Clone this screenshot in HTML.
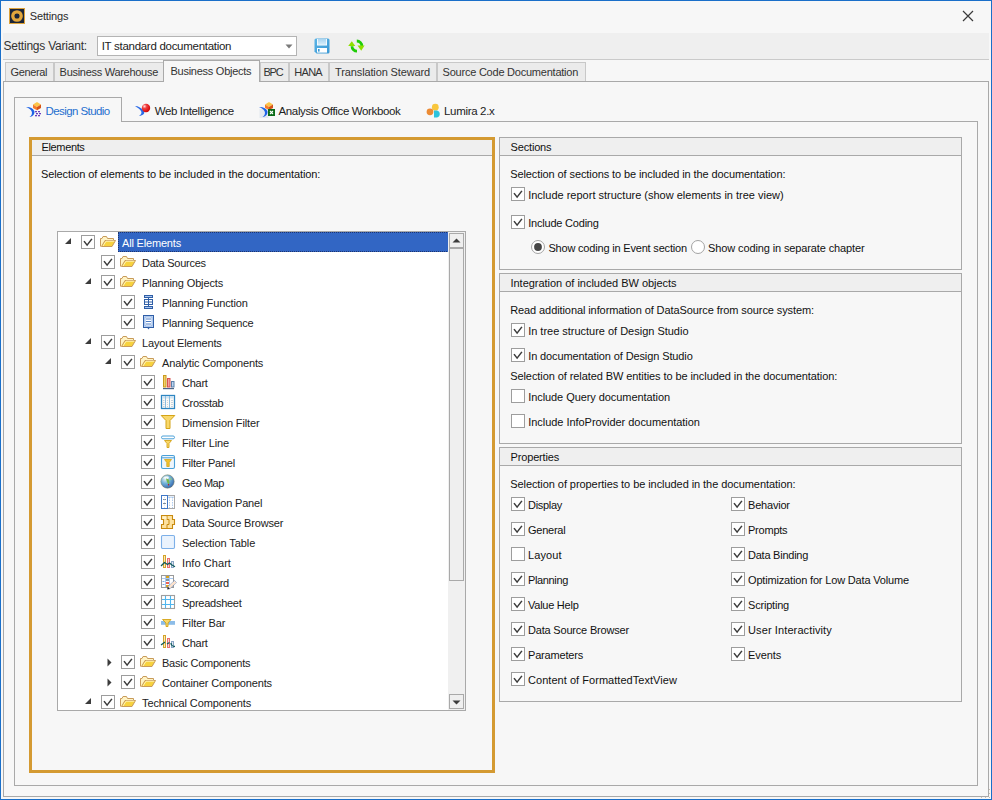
<!DOCTYPE html>
<html><head><meta charset="utf-8"><style>
html,body{margin:0;padding:0;}
body{width:992px;height:800px;position:relative;overflow:hidden;background:#f7f7f7;font-family:"Liberation Sans", sans-serif;}
svg{display:block;overflow:visible;}
</style></head><body>
<div style="position:absolute;left:0px;top:0px;width:992px;height:800px;box-sizing:border-box;border:1px solid #1a6fc9;"></div>
<svg style="position:absolute;left:9px;top:8px" width="16" height="16" viewBox="0 0 16 16"><rect x="0.5" y="0.5" width="15" height="15" fill="#1a2438" stroke="#dba13a"/>
<circle cx="8" cy="8" r="4.2" fill="none" stroke="#e2a63c" stroke-width="3.3"/>
<rect x="6" y="6" width="4" height="4" fill="#1a2438"/></svg>
<div style="position:absolute;left:29.8px;top:8.0px;height:16px;line-height:16px;font-size:11px;color:#2a2a2a;letter-spacing:-0.156px;white-space:nowrap;">Settings</div>
<svg style="position:absolute;left:962px;top:10px" width="12" height="12" viewBox="0 0 12 12"><path d="M1 1 L11 11 M11 1 L1 11" stroke="#3a3a3a" stroke-width="1.2"/></svg>
<div style="position:absolute;left:3px;top:33px;width:986px;height:26px;background:#efefef;"></div>
<div style="position:absolute;left:3px;top:59px;width:986px;height:1px;background:#cacaca;"></div>
<div style="position:absolute;left:3.5px;top:38.0px;height:16px;line-height:16px;font-size:12px;color:#333;letter-spacing:-0.222px;white-space:nowrap;">Settings Variant:</div>
<div style="position:absolute;left:97px;top:36px;width:200px;height:20px;box-sizing:border-box;border:1px solid #b4b4b4;background:#fff;"></div>
<div style="position:absolute;left:101.7px;top:38.0px;height:16px;line-height:16px;font-size:11.5px;color:#222;letter-spacing:-0.284px;white-space:nowrap;">IT standard documentation</div>
<svg style="position:absolute;left:285px;top:44px" width="8" height="5" viewBox="0 0 8 5"><path d="M0.5 0.5 H7.5 L4 4.5 Z" fill="#7a7a7a"/></svg>
<svg style="position:absolute;left:314px;top:38px" width="16" height="16" viewBox="0 0 16 16"><defs><linearGradient id="sv" x1="0" y1="0" x2="1" y2="1"><stop offset="0" stop-color="#5ab4e6"/><stop offset="1" stop-color="#3a98d4"/></linearGradient><linearGradient id="sl" x1="0" y1="0" x2="0" y2="1"><stop offset="0" stop-color="#a8d4f0"/><stop offset="1" stop-color="#d8eefa"/></linearGradient></defs>
<path d="M0.5 2 Q0.5 0.5 2 0.5 H14 Q15.5 0.5 15.5 2 V14 Q15.5 15.5 14 15.5 H2.5 L0.5 13.5 Z" fill="url(#sv)"/>
<rect x="3" y="1" width="10" height="6.5" fill="#ffffff"/>
<rect x="3.8" y="1" width="8.4" height="5.8" fill="url(#sl)"/>
<rect x="3" y="10" width="10" height="4.6" fill="#ffffff"/>
<rect x="4" y="11" width="1.6" height="2.6" fill="#3a98d4"/></svg>
<svg style="position:absolute;left:347px;top:38px" width="18" height="16" viewBox="0 0 18 16"><path d="M5 8.2 A5 5 0 0 0 10 13.2" fill="none" stroke="#1fcc08" stroke-width="2.8"/>
<path d="M9.8 3 A5 5 0 0 1 14.8 8" fill="none" stroke="#1fcc08" stroke-width="2.8"/>
<path d="M1.2 8 L4.8 3.2 L8.3 8 Z" fill="#8ee000"/>
<path d="M10.5 7.6 L14.2 12.7 L17.6 7.6 Z" fill="#8ee000"/></svg>
<div style="position:absolute;left:3px;top:81px;width:986px;height:716px;box-sizing:border-box;border:1px solid #a9a9a9;"></div>
<div style="position:absolute;left:5px;top:62px;width:49px;height:19px;box-sizing:border-box;border:1px solid #c8c8c8;border-bottom:none;background:#ebebeb;"></div>
<div style="position:absolute;left:10.6px;top:64.0px;height:16px;line-height:16px;font-size:11px;color:#333;letter-spacing:-0.377px;white-space:nowrap;">General</div>
<div style="position:absolute;left:54px;top:62px;width:110px;height:19px;box-sizing:border-box;border:1px solid #c8c8c8;border-bottom:none;background:#ebebeb;"></div>
<div style="position:absolute;left:59.6px;top:64.0px;height:16px;line-height:16px;font-size:11px;color:#333;letter-spacing:-0.286px;white-space:nowrap;">Business Warehouse</div>
<div style="position:absolute;left:260px;top:62px;width:29px;height:19px;box-sizing:border-box;border:1px solid #c8c8c8;border-bottom:none;background:#ebebeb;"></div>
<div style="position:absolute;left:263.4px;top:64.0px;height:16px;line-height:16px;font-size:11px;color:#333;letter-spacing:-1.175px;white-space:nowrap;">BPC</div>
<div style="position:absolute;left:289px;top:62px;width:40px;height:19px;box-sizing:border-box;border:1px solid #c8c8c8;border-bottom:none;background:#ebebeb;"></div>
<div style="position:absolute;left:294.3px;top:64.0px;height:16px;line-height:16px;font-size:11px;color:#333;letter-spacing:-0.716px;white-space:nowrap;">HANA</div>
<div style="position:absolute;left:329px;top:62px;width:108px;height:19px;box-sizing:border-box;border:1px solid #c8c8c8;border-bottom:none;background:#ebebeb;"></div>
<div style="position:absolute;left:335.1px;top:64.0px;height:16px;line-height:16px;font-size:11px;color:#333;letter-spacing:-0.133px;white-space:nowrap;">Translation Steward</div>
<div style="position:absolute;left:437px;top:62px;width:149px;height:19px;box-sizing:border-box;border:1px solid #c8c8c8;border-bottom:none;background:#ebebeb;"></div>
<div style="position:absolute;left:442.6px;top:64.0px;height:16px;line-height:16px;font-size:11px;color:#333;letter-spacing:-0.230px;white-space:nowrap;">Source Code Documentation</div>
<div style="position:absolute;left:163px;top:60px;width:97px;height:22px;box-sizing:border-box;border:1px solid #a9a9a9;border-bottom:none;background:#f7f7f7;"></div>
<div style="position:absolute;left:164px;top:81px;width:95px;height:1px;background:#f7f7f7;"></div>
<div style="position:absolute;left:170.5px;top:63.0px;height:16px;line-height:16px;font-size:11px;color:#333;letter-spacing:-0.262px;white-space:nowrap;">Business Objects</div>
<div style="position:absolute;left:14px;top:121px;width:964px;height:665px;box-sizing:border-box;border:1px solid #a9a9a9;"></div>
<div style="position:absolute;left:14px;top:97px;width:108px;height:25px;box-sizing:border-box;border:1px solid #a9a9a9;border-bottom:none;background:#f7f7f7;"></div>
<div style="position:absolute;left:15px;top:121px;width:106px;height:1px;background:#f7f7f7;"></div>
<div style="position:absolute;left:45.6px;top:103.0px;height:16px;line-height:16px;font-size:11.5px;color:#1f6fcf;letter-spacing:-0.585px;white-space:nowrap;">Design Studio</div>
<div style="position:absolute;left:154.7px;top:103.0px;height:16px;line-height:16px;font-size:11.5px;color:#222;letter-spacing:-0.363px;white-space:nowrap;">Web Intelligence</div>
<div style="position:absolute;left:278.5px;top:103.0px;height:16px;line-height:16px;font-size:11.5px;color:#222;letter-spacing:-0.359px;white-space:nowrap;">Analysis Office Workbook</div>
<div style="position:absolute;left:444px;top:103.0px;height:16px;line-height:16px;font-size:11.5px;color:#222;letter-spacing:-0.319px;white-space:nowrap;">Lumira 2.x</div>
<svg style="position:absolute;left:22px;top:98px" width="24" height="24" viewBox="0 0 24 24"><path d="M4 9 C7 8.5 11 10 12.3 13 C13 15.5 11.5 18.5 7.5 19 C10 17.5 10.5 15 9.5 13 C8.5 11 6.5 10 4 9 Z" fill="#1d63e6"/>
<path d="M11 6.5 L15 4 L19 6.5 L15 9 Z" fill="#fcc64a"/>
<path d="M11 6.5 L15 9 L15 12.2 L11 10 Z" fill="#f57b2a"/>
<path d="M19 6.5 L15 9 L15 12.2 L19 10 Z" fill="#d65318"/>
<g fill="#6a3fc0"><rect x="13" y="13" width="2" height="1.3"/><rect x="16" y="13" width="2" height="1.3"/><rect x="14" y="15" width="2" height="1.3"/><rect x="17" y="15" width="2" height="1.3"/><rect x="13" y="17" width="2" height="1.3"/><rect x="16" y="17" width="2" height="1.3"/></g></svg>
<svg style="position:absolute;left:130px;top:98px" width="24" height="24" viewBox="0 0 24 24"><path d="M5 8 C8 8 12 10 14 13 C15 15.5 13.5 17.5 9 18 C11.5 16.5 12 14.5 11 13 C9.5 11 7.5 9.5 5 8 Z" fill="#2a6ae8"/><defs><radialGradient id="wb" cx="0.32" cy="0.3" r="0.75"><stop offset="0" stop-color="#ffe0e0"/><stop offset="0.35" stop-color="#f04040"/><stop offset="1" stop-color="#d00000"/></radialGradient></defs><circle cx="16" cy="10" r="4.2" fill="url(#wb)"/></svg>
<svg style="position:absolute;left:255px;top:98px" width="24" height="24" viewBox="0 0 24 24"><rect x="4.5" y="11" width="9" height="9" fill="#e4e9f0"/><path d="M4 9 C7 8.5 11 10 12.3 13 C13 15.5 11.5 18.5 7.5 19 C10 17.5 10.5 15 9.5 13 C8.5 11 6.5 10 4 9 Z" fill="#1d63e6"/>
<path d="M10 6.5 L14 4 L18 6.5 L14 9 Z" fill="#fcc64a"/>
<path d="M10 6.5 L14 9 L14 12 L10 10 Z" fill="#f57b2a"/>
<path d="M18 6.5 L14 9 L14 12 L18 10 Z" fill="#d65318"/>
<rect x="13" y="11" width="7" height="7" fill="#0b6b18"/>
<path d="M15 13 L18 16 M18 13 L15 16" stroke="#fff" stroke-width="1.1"/></svg>
<svg style="position:absolute;left:422px;top:98px" width="24" height="24" viewBox="0 0 24 24"><circle cx="13.3" cy="9.2" r="3.4" fill="#f8c63c"/><circle cx="8" cy="13.8" r="3.4" fill="#ec8b34"/><path d="M12 12.5 H15 A3.6 3.6 0 0 1 15 19.5 H12 Z" fill="#2dc3dd"/></svg>
<div style="position:absolute;left:29px;top:137px;width:466px;height:636px;box-sizing:border-box;border:3px solid #d49a32;"></div>
<div style="position:absolute;left:32px;top:140px;width:460px;height:15px;background:#efefef;"></div>
<div style="position:absolute;left:32px;top:155px;width:460px;height:1px;background:#a9a9a9;"></div>
<div style="position:absolute;left:41.5px;top:139.0px;height:16px;line-height:16px;font-size:11px;color:#111;letter-spacing:-0.357px;white-space:nowrap;">Elements</div>
<div style="position:absolute;left:41px;top:166.0px;height:16px;line-height:16px;font-size:11px;color:#111;letter-spacing:-0.098px;white-space:nowrap;">Selection of elements to be included in the documentation:</div>
<div style="position:absolute;left:57px;top:231px;width:409px;height:480px;box-sizing:border-box;border:1px solid #a9a9a9;background:#fff;"></div>
<div style="position:absolute;left:58px;top:232px;width:407px;height:478px;overflow:hidden;">
<div style="position:absolute;left:60px;top:0px;width:331px;height:20px;box-sizing:border-box;background:#3266c4;border:1px dotted #1d3570;"></div>
<svg style="position:absolute;left:7px;top:6px" width="7" height="6" viewBox="0 0 7 6"><path d="M6 0 V6 H0 Z" fill="#3c3c3c"/></svg>
<div style="position:absolute;left:23px;top:3px;width:14px;height:14px;box-sizing:border-box;border:1px solid #9d9d9d;background:#fff;"></div><svg style="position:absolute;left:23px;top:3px" width="14" height="14" viewBox="0 0 14 14"><path d="M3 6.1 L6.1 10.1 L10.9 3.9" fill="none" stroke="#3c3c3c" stroke-width="1.55"/></svg>
<svg style="position:absolute;left:42px;top:2px" width="16" height="16" viewBox="0 0 16 16"><path d="M0.5 12.5 V4.5 H2 L3 2.5 H6.5 L7.5 4.5 H13.5 V6.5" fill="#fff3c4" stroke="#c89b5a"/>
<path d="M1.5 12.5 L5 6.5 H15.5 L12 12.5 Z" fill="#f7d23e" stroke="#c89b5a"/>
<path d="M3 12 L6 7.2 H14.3" fill="none" stroke="#fff6c8" stroke-width="0.9"/></svg>
<div style="position:absolute;left:64px;top:3.0px;height:16px;line-height:16px;font-size:11px;color:#ffffff;letter-spacing:-0.178px;white-space:nowrap;">All Elements</div>
<div style="position:absolute;left:43px;top:23px;width:14px;height:14px;box-sizing:border-box;border:1px solid #9d9d9d;background:#fff;"></div><svg style="position:absolute;left:43px;top:23px" width="14" height="14" viewBox="0 0 14 14"><path d="M3 6.1 L6.1 10.1 L10.9 3.9" fill="none" stroke="#3c3c3c" stroke-width="1.55"/></svg>
<svg style="position:absolute;left:62px;top:22px" width="16" height="16" viewBox="0 0 16 16"><path d="M0.5 12.5 V4.5 H2 L3 2.5 H6.5 L7.5 4.5 H13.5 V6.5" fill="#fff3c4" stroke="#c89b5a"/>
<path d="M1.5 12.5 L5 6.5 H15.5 L12 12.5 Z" fill="#f7d23e" stroke="#c89b5a"/>
<path d="M3 12 L6 7.2 H14.3" fill="none" stroke="#fff6c8" stroke-width="0.9"/></svg>
<div style="position:absolute;left:84px;top:23.0px;height:16px;line-height:16px;font-size:11px;color:#222;letter-spacing:-0.230px;white-space:nowrap;">Data Sources</div>
<svg style="position:absolute;left:27px;top:46px" width="7" height="6" viewBox="0 0 7 6"><path d="M6 0 V6 H0 Z" fill="#3c3c3c"/></svg>
<div style="position:absolute;left:43px;top:43px;width:14px;height:14px;box-sizing:border-box;border:1px solid #9d9d9d;background:#fff;"></div><svg style="position:absolute;left:43px;top:43px" width="14" height="14" viewBox="0 0 14 14"><path d="M3 6.1 L6.1 10.1 L10.9 3.9" fill="none" stroke="#3c3c3c" stroke-width="1.55"/></svg>
<svg style="position:absolute;left:62px;top:42px" width="16" height="16" viewBox="0 0 16 16"><path d="M0.5 12.5 V4.5 H2 L3 2.5 H6.5 L7.5 4.5 H13.5 V6.5" fill="#fff3c4" stroke="#c89b5a"/>
<path d="M1.5 12.5 L5 6.5 H15.5 L12 12.5 Z" fill="#f7d23e" stroke="#c89b5a"/>
<path d="M3 12 L6 7.2 H14.3" fill="none" stroke="#fff6c8" stroke-width="0.9"/></svg>
<div style="position:absolute;left:84px;top:43.0px;height:16px;line-height:16px;font-size:11px;color:#222;letter-spacing:-0.129px;white-space:nowrap;">Planning Objects</div>
<div style="position:absolute;left:63px;top:63px;width:14px;height:14px;box-sizing:border-box;border:1px solid #9d9d9d;background:#fff;"></div><svg style="position:absolute;left:63px;top:63px" width="14" height="14" viewBox="0 0 14 14"><path d="M3 6.1 L6.1 10.1 L10.9 3.9" fill="none" stroke="#3c3c3c" stroke-width="1.55"/></svg>
<svg style="position:absolute;left:82px;top:62px" width="16" height="16" viewBox="0 0 16 16"><g fill="none" stroke="#2f5ea6" stroke-width="1"><rect x="4.5" y="1.5" width="8" height="2"/><rect x="4.5" y="5.5" width="8" height="5"/><rect x="4.5" y="12.5" width="8" height="2"/><path d="M8.5 3.5 V5.5 M8.5 10.5 V12.5 M4.5 8 H12.5 M8.5 5.5 V10.5"/></g><g fill="#a9c4ee"><rect x="5" y="2" width="7" height="1"/><rect x="5" y="13" width="7" height="1"/></g></svg>
<div style="position:absolute;left:104px;top:63.0px;height:16px;line-height:16px;font-size:11px;color:#222;letter-spacing:-0.139px;white-space:nowrap;">Planning Function</div>
<div style="position:absolute;left:63px;top:83px;width:14px;height:14px;box-sizing:border-box;border:1px solid #9d9d9d;background:#fff;"></div><svg style="position:absolute;left:63px;top:83px" width="14" height="14" viewBox="0 0 14 14"><path d="M3 6.1 L6.1 10.1 L10.9 3.9" fill="none" stroke="#3c3c3c" stroke-width="1.55"/></svg>
<svg style="position:absolute;left:82px;top:82px" width="16" height="16" viewBox="0 0 16 16"><rect x="3.5" y="1.5" width="10" height="12" fill="#cfe1fa" stroke="#2f5ea6"/><rect x="5" y="3" width="7" height="9" fill="#fff" stroke="#7aa2dc" stroke-width="0.8"/><path d="M6 5 H11 M6 7.5 H11 M6 10 H11" stroke="#4f7fc6" stroke-width="1"/><path d="M7.5 14 L8.5 15.5 L9.5 14 Z" fill="#2f5ea6"/></svg>
<div style="position:absolute;left:104px;top:83.0px;height:16px;line-height:16px;font-size:11px;color:#222;letter-spacing:-0.242px;white-space:nowrap;">Planning Sequence</div>
<svg style="position:absolute;left:27px;top:106px" width="7" height="6" viewBox="0 0 7 6"><path d="M6 0 V6 H0 Z" fill="#3c3c3c"/></svg>
<div style="position:absolute;left:43px;top:103px;width:14px;height:14px;box-sizing:border-box;border:1px solid #9d9d9d;background:#fff;"></div><svg style="position:absolute;left:43px;top:103px" width="14" height="14" viewBox="0 0 14 14"><path d="M3 6.1 L6.1 10.1 L10.9 3.9" fill="none" stroke="#3c3c3c" stroke-width="1.55"/></svg>
<svg style="position:absolute;left:62px;top:102px" width="16" height="16" viewBox="0 0 16 16"><path d="M0.5 12.5 V4.5 H2 L3 2.5 H6.5 L7.5 4.5 H13.5 V6.5" fill="#fff3c4" stroke="#c89b5a"/>
<path d="M1.5 12.5 L5 6.5 H15.5 L12 12.5 Z" fill="#f7d23e" stroke="#c89b5a"/>
<path d="M3 12 L6 7.2 H14.3" fill="none" stroke="#fff6c8" stroke-width="0.9"/></svg>
<div style="position:absolute;left:84px;top:103.0px;height:16px;line-height:16px;font-size:11px;color:#222;letter-spacing:-0.149px;white-space:nowrap;">Layout Elements</div>
<svg style="position:absolute;left:47px;top:126px" width="7" height="6" viewBox="0 0 7 6"><path d="M6 0 V6 H0 Z" fill="#3c3c3c"/></svg>
<div style="position:absolute;left:63px;top:123px;width:14px;height:14px;box-sizing:border-box;border:1px solid #9d9d9d;background:#fff;"></div><svg style="position:absolute;left:63px;top:123px" width="14" height="14" viewBox="0 0 14 14"><path d="M3 6.1 L6.1 10.1 L10.9 3.9" fill="none" stroke="#3c3c3c" stroke-width="1.55"/></svg>
<svg style="position:absolute;left:82px;top:122px" width="16" height="16" viewBox="0 0 16 16"><path d="M0.5 12.5 V4.5 H2 L3 2.5 H6.5 L7.5 4.5 H13.5 V6.5" fill="#fff3c4" stroke="#c89b5a"/>
<path d="M1.5 12.5 L5 6.5 H15.5 L12 12.5 Z" fill="#f7d23e" stroke="#c89b5a"/>
<path d="M3 12 L6 7.2 H14.3" fill="none" stroke="#fff6c8" stroke-width="0.9"/></svg>
<div style="position:absolute;left:104px;top:123.0px;height:16px;line-height:16px;font-size:11px;color:#222;letter-spacing:-0.145px;white-space:nowrap;">Analytic Components</div>
<div style="position:absolute;left:83px;top:143px;width:14px;height:14px;box-sizing:border-box;border:1px solid #9d9d9d;background:#fff;"></div><svg style="position:absolute;left:83px;top:143px" width="14" height="14" viewBox="0 0 14 14"><path d="M3 6.1 L6.1 10.1 L10.9 3.9" fill="none" stroke="#3c3c3c" stroke-width="1.55"/></svg>
<svg style="position:absolute;left:102px;top:142px" width="16" height="16" viewBox="0 0 16 16"><rect x="3.5" y="1.5" width="2.5" height="11.5" fill="#f2cf6a" stroke="#c99a1e"/><rect x="7.5" y="4.5" width="2.5" height="8.5" fill="#f2a0a0" stroke="#d9534f"/><rect x="11.5" y="7.5" width="2.5" height="5.5" fill="#b9d6f2" stroke="#5b7fa8"/><rect x="3" y="14" width="11" height="1.2" fill="#4b6488"/></svg>
<div style="position:absolute;left:124px;top:143.0px;height:16px;line-height:16px;font-size:11px;color:#222;letter-spacing:-0.261px;white-space:nowrap;">Chart</div>
<div style="position:absolute;left:83px;top:163px;width:14px;height:14px;box-sizing:border-box;border:1px solid #9d9d9d;background:#fff;"></div><svg style="position:absolute;left:83px;top:163px" width="14" height="14" viewBox="0 0 14 14"><path d="M3 6.1 L6.1 10.1 L10.9 3.9" fill="none" stroke="#3c3c3c" stroke-width="1.55"/></svg>
<svg style="position:absolute;left:102px;top:162px" width="16" height="16" viewBox="0 0 16 16"><rect x="1.5" y="1.5" width="13" height="13" fill="#fdfaf5" stroke="#2e86c1" stroke-width="1.3"/><rect x="2" y="2" width="12" height="2.5" fill="#cfe3f2"/><path d="M5.5 2 V14 M9.5 2 V14" stroke="#8cbde0" stroke-width="1"/><g fill="#b8c8d8"><rect x="3" y="6" width="1.5" height="0.8"/><rect x="3" y="8" width="1.5" height="0.8"/><rect x="3" y="10" width="1.5" height="0.8"/><rect x="3" y="12" width="1.5" height="0.8"/><rect x="7" y="6" width="1" height="0.8"/><rect x="7" y="8" width="1" height="0.8"/><rect x="7" y="10" width="1" height="0.8"/><rect x="7" y="12" width="1" height="0.8"/><rect x="11" y="6" width="2" height="0.8"/><rect x="11" y="8" width="2" height="0.8"/><rect x="11" y="10" width="2" height="0.8"/><rect x="11" y="12" width="2" height="0.8"/></g></svg>
<div style="position:absolute;left:124px;top:163.0px;height:16px;line-height:16px;font-size:11px;color:#222;letter-spacing:-0.341px;white-space:nowrap;">Crosstab</div>
<div style="position:absolute;left:83px;top:183px;width:14px;height:14px;box-sizing:border-box;border:1px solid #9d9d9d;background:#fff;"></div><svg style="position:absolute;left:83px;top:183px" width="14" height="14" viewBox="0 0 14 14"><path d="M3 6.1 L6.1 10.1 L10.9 3.9" fill="none" stroke="#3c3c3c" stroke-width="1.55"/></svg>
<svg style="position:absolute;left:102px;top:182px" width="16" height="16" viewBox="0 0 16 16"><path d="M1.2 1.5 H14.8 L10 6.5 V14.5 H6 V6.5 Z" fill="#f9d86a" stroke="#d4a418" stroke-width="1"/></svg>
<div style="position:absolute;left:124px;top:183.0px;height:16px;line-height:16px;font-size:11px;color:#222;letter-spacing:-0.117px;white-space:nowrap;">Dimension Filter</div>
<div style="position:absolute;left:83px;top:203px;width:14px;height:14px;box-sizing:border-box;border:1px solid #9d9d9d;background:#fff;"></div><svg style="position:absolute;left:83px;top:203px" width="14" height="14" viewBox="0 0 14 14"><path d="M3 6.1 L6.1 10.1 L10.9 3.9" fill="none" stroke="#3c3c3c" stroke-width="1.55"/></svg>
<svg style="position:absolute;left:102px;top:202px" width="16" height="16" viewBox="0 0 16 16"><rect x="1.5" y="2" width="13" height="2.8" rx="1.4" fill="#fff" stroke="#4aa0d8" stroke-width="1"/><path d="M4.5 6.5 H11.5 L9 9.5 V13.5 H7 V9.5 Z" fill="#f9d86a" stroke="#d4a418" stroke-width="0.9"/></svg>
<div style="position:absolute;left:124px;top:203.0px;height:16px;line-height:16px;font-size:11px;color:#222;letter-spacing:-0.118px;white-space:nowrap;">Filter Line</div>
<div style="position:absolute;left:83px;top:223px;width:14px;height:14px;box-sizing:border-box;border:1px solid #9d9d9d;background:#fff;"></div><svg style="position:absolute;left:83px;top:223px" width="14" height="14" viewBox="0 0 14 14"><path d="M3 6.1 L6.1 10.1 L10.9 3.9" fill="none" stroke="#3c3c3c" stroke-width="1.55"/></svg>
<svg style="position:absolute;left:102px;top:222px" width="16" height="16" viewBox="0 0 16 16"><rect x="1.5" y="1.5" width="13" height="13" rx="1.5" fill="#eef5fc" stroke="#4aa0d8" stroke-width="1.1"/><path d="M1.5 3.8 H14.5" stroke="#4aa0d8" stroke-width="1"/><path d="M4.5 5.5 H11.5 L9.2 8.5 V12.5 H6.8 V8.5 Z" fill="#f2c230" stroke="#d4a418" stroke-width="0.8"/></svg>
<div style="position:absolute;left:124px;top:223.0px;height:16px;line-height:16px;font-size:11px;color:#222;letter-spacing:-0.220px;white-space:nowrap;">Filter Panel</div>
<div style="position:absolute;left:83px;top:243px;width:14px;height:14px;box-sizing:border-box;border:1px solid #9d9d9d;background:#fff;"></div><svg style="position:absolute;left:83px;top:243px" width="14" height="14" viewBox="0 0 14 14"><path d="M3 6.1 L6.1 10.1 L10.9 3.9" fill="none" stroke="#3c3c3c" stroke-width="1.55"/></svg>
<svg style="position:absolute;left:102px;top:242px" width="16" height="16" viewBox="0 0 16 16"><defs><radialGradient id="gm" cx="0.35" cy="0.3" r="0.8"><stop offset="0" stop-color="#e8f4f0"/><stop offset="0.45" stop-color="#6fb0d8"/><stop offset="1" stop-color="#2c5aa8"/></radialGradient></defs><circle cx="7.5" cy="7.5" r="6.7" fill="url(#gm)" stroke="#7a7a50" stroke-width="0.5"/><path d="M3 4.5 C4.5 2.5 7 2 9 3 L8 5 L6 4.5 Z" fill="#ffffff" opacity="0.85"/><path d="M6 4.5 L9 5.5 L9.5 8.5 L8.5 10.5 L7 8 Z" fill="#78b84a"/><path d="M10 3.5 L12 5 L11 6.5 Z" fill="#9ccc70"/><circle cx="8.5" cy="10.8" r="0.7" fill="#d01010"/></svg>
<div style="position:absolute;left:124px;top:243.0px;height:16px;line-height:16px;font-size:11px;color:#222;letter-spacing:-0.479px;white-space:nowrap;">Geo Map</div>
<div style="position:absolute;left:83px;top:263px;width:14px;height:14px;box-sizing:border-box;border:1px solid #9d9d9d;background:#fff;"></div><svg style="position:absolute;left:83px;top:263px" width="14" height="14" viewBox="0 0 14 14"><path d="M3 6.1 L6.1 10.1 L10.9 3.9" fill="none" stroke="#3c3c3c" stroke-width="1.55"/></svg>
<svg style="position:absolute;left:102px;top:262px" width="16" height="16" viewBox="0 0 16 16"><rect x="7.5" y="1.5" width="7" height="13" fill="#fff" stroke="#a8a8a8"/><path d="M9.5 3 V14 M12.5 3 V14" stroke="#9cc0ec" stroke-width="0.8" stroke-dasharray="1.5 1"/><path d="M8 3.2 H14" stroke="#9cc0ec" stroke-width="0.8"/><rect x="1.5" y="1.5" width="6" height="13" fill="#fff" stroke="#3f78c8"/><path d="M3 5.5 H6 M3 9.5 H6" stroke="#707f90" stroke-width="0.9"/><path d="M4.5 3 V14" stroke="#c5d8f0" stroke-width="0.8" stroke-dasharray="1 1.5"/></svg>
<div style="position:absolute;left:124px;top:263.0px;height:16px;line-height:16px;font-size:11px;color:#222;letter-spacing:-0.186px;white-space:nowrap;">Navigation Panel</div>
<div style="position:absolute;left:83px;top:283px;width:14px;height:14px;box-sizing:border-box;border:1px solid #9d9d9d;background:#fff;"></div><svg style="position:absolute;left:83px;top:283px" width="14" height="14" viewBox="0 0 14 14"><path d="M3 6.1 L6.1 10.1 L10.9 3.9" fill="none" stroke="#3c3c3c" stroke-width="1.55"/></svg>
<svg style="position:absolute;left:102px;top:282px" width="16" height="16" viewBox="0 0 16 16"><path d="M1.5 1.5 H12.5 V5.5 H14.5 V10.5 H12.5 V14.5 H1.5 V10.5 H3.5 V5.5 H1.5 Z" fill="#fde2a0" stroke="#c88a10" stroke-width="1.1"/><path d="M7 1.5 V5.5 H9 V10.5 H7 V14.5" fill="none" stroke="#c88a10" stroke-width="1"/><path d="M2.5 2.5 H6.5 V5 H2.5 Z" fill="#fff2cc"/></svg>
<div style="position:absolute;left:124px;top:283.0px;height:16px;line-height:16px;font-size:11px;color:#222;letter-spacing:-0.176px;white-space:nowrap;">Data Source Browser</div>
<div style="position:absolute;left:83px;top:303px;width:14px;height:14px;box-sizing:border-box;border:1px solid #9d9d9d;background:#fff;"></div><svg style="position:absolute;left:83px;top:303px" width="14" height="14" viewBox="0 0 14 14"><path d="M3 6.1 L6.1 10.1 L10.9 3.9" fill="none" stroke="#3c3c3c" stroke-width="1.55"/></svg>
<svg style="position:absolute;left:102px;top:302px" width="16" height="16" viewBox="0 0 16 16"><rect x="1.5" y="1.5" width="13" height="13" rx="1.2" fill="#eaf3fd" stroke="#7db0e8" stroke-width="1.1"/></svg>
<div style="position:absolute;left:124px;top:303.0px;height:16px;line-height:16px;font-size:11px;color:#222;letter-spacing:-0.080px;white-space:nowrap;">Selection Table</div>
<div style="position:absolute;left:83px;top:323px;width:14px;height:14px;box-sizing:border-box;border:1px solid #9d9d9d;background:#fff;"></div><svg style="position:absolute;left:83px;top:323px" width="14" height="14" viewBox="0 0 14 14"><path d="M3 6.1 L6.1 10.1 L10.9 3.9" fill="none" stroke="#3c3c3c" stroke-width="1.55"/></svg>
<svg style="position:absolute;left:102px;top:322px" width="16" height="16" viewBox="0 0 16 16"><rect x="3.5" y="1.5" width="2" height="12" fill="#fbeab8" stroke="#d4a32a" stroke-width="1"/><rect x="7.5" y="4.5" width="2" height="9" fill="#fbd0d0" stroke="#e87070" stroke-width="1"/><rect x="11.5" y="7.5" width="2" height="6" fill="#dde8f4" stroke="#8aa4c4" stroke-width="1"/><path d="M1 12 L4.5 8.5 L7.5 10.5 L9.5 9 L12 11 L15 12.8" fill="none" stroke="#125c5c" stroke-width="1.3" stroke-linejoin="round"/></svg>
<div style="position:absolute;left:124px;top:323.0px;height:16px;line-height:16px;font-size:11px;color:#222;letter-spacing:0.069px;white-space:nowrap;">Info Chart</div>
<div style="position:absolute;left:83px;top:343px;width:14px;height:14px;box-sizing:border-box;border:1px solid #9d9d9d;background:#fff;"></div><svg style="position:absolute;left:83px;top:343px" width="14" height="14" viewBox="0 0 14 14"><path d="M3 6.1 L6.1 10.1 L10.9 3.9" fill="none" stroke="#3c3c3c" stroke-width="1.55"/></svg>
<svg style="position:absolute;left:102px;top:342px" width="16" height="16" viewBox="0 0 16 16"><rect x="1.5" y="1.5" width="12" height="12" fill="#fff" stroke="#9a9a9a"/><path d="M2 4.5 H13" stroke="#a8c8f0"/><path d="M5.5 2 V13 M9.5 2 V13" stroke="#a8c8f0"/><rect x="6" y="2" width="3" height="2" fill="#d9a21e"/><rect x="6" y="5" width="3" height="2" fill="#7a96a8"/><rect x="6" y="8" width="3" height="2" fill="#f06050"/><rect x="6" y="11" width="3" height="2" fill="#d9a21e"/><path d="M2.5 7.5 H4.5 M2.5 10.5 H4.5" stroke="#7aa8e0"/><path d="M9.83 14.89 L7.77 12.71 L14.47 6.41 L16.53 8.59 Z" fill="#fde2cc" stroke="#4a78b8" stroke-width="0.8" stroke-dasharray="1 0.7"/><path d="M7.1 15.4 L7.77 12.71 L9.83 14.89 Z" fill="#2a2a2a"/></svg>
<div style="position:absolute;left:124px;top:343.0px;height:16px;line-height:16px;font-size:11px;color:#222;letter-spacing:-0.371px;white-space:nowrap;">Scorecard</div>
<div style="position:absolute;left:83px;top:363px;width:14px;height:14px;box-sizing:border-box;border:1px solid #9d9d9d;background:#fff;"></div><svg style="position:absolute;left:83px;top:363px" width="14" height="14" viewBox="0 0 14 14"><path d="M3 6.1 L6.1 10.1 L10.9 3.9" fill="none" stroke="#3c3c3c" stroke-width="1.55"/></svg>
<svg style="position:absolute;left:102px;top:362px" width="16" height="16" viewBox="0 0 16 16"><rect x="1.5" y="1.5" width="13" height="13" fill="#fff" stroke="#9f9f9f" stroke-width="1.1"/><path d="M5.5 2 V14 M10.5 2 V14 M2 5.5 H14 M2 10.5 H14" stroke="#4fb6ee" stroke-width="1.1"/></svg>
<div style="position:absolute;left:124px;top:363.0px;height:16px;line-height:16px;font-size:11px;color:#222;letter-spacing:-0.263px;white-space:nowrap;">Spreadsheet</div>
<div style="position:absolute;left:83px;top:383px;width:14px;height:14px;box-sizing:border-box;border:1px solid #9d9d9d;background:#fff;"></div><svg style="position:absolute;left:83px;top:383px" width="14" height="14" viewBox="0 0 14 14"><path d="M3 6.1 L6.1 10.1 L10.9 3.9" fill="none" stroke="#3c3c3c" stroke-width="1.55"/></svg>
<svg style="position:absolute;left:102px;top:382px" width="16" height="16" viewBox="0 0 16 16"><rect x="1" y="7" width="14" height="3.8" fill="#8dbde8"/><path d="M2.5 5.5 H11 L8 9 V12.5 H6 V9 Z" fill="#f9d86a" stroke="#d4a418" stroke-width="0.9"/></svg>
<div style="position:absolute;left:124px;top:383.0px;height:16px;line-height:16px;font-size:11px;color:#222;letter-spacing:-0.133px;white-space:nowrap;">Filter Bar</div>
<div style="position:absolute;left:83px;top:403px;width:14px;height:14px;box-sizing:border-box;border:1px solid #9d9d9d;background:#fff;"></div><svg style="position:absolute;left:83px;top:403px" width="14" height="14" viewBox="0 0 14 14"><path d="M3 6.1 L6.1 10.1 L10.9 3.9" fill="none" stroke="#3c3c3c" stroke-width="1.55"/></svg>
<svg style="position:absolute;left:102px;top:402px" width="16" height="16" viewBox="0 0 16 16"><rect x="3.5" y="1.5" width="2" height="12" fill="#fbeab8" stroke="#d4a32a" stroke-width="1"/><rect x="7.5" y="4.5" width="2" height="9" fill="#fbd0d0" stroke="#e87070" stroke-width="1"/><rect x="11.5" y="7.5" width="2" height="6" fill="#dde8f4" stroke="#8aa4c4" stroke-width="1"/><path d="M1 11 L5 8" stroke="#0f5b5b" stroke-width="1.3"/><path d="M7 10 L9.5 8.5" stroke="#0f5b5b" stroke-width="1.3"/><path d="M11 9 C11 11 13 12.5 15 12.5" fill="none" stroke="#0f5b5b" stroke-width="1.3"/></svg>
<div style="position:absolute;left:124px;top:403.0px;height:16px;line-height:16px;font-size:11px;color:#222;letter-spacing:-0.261px;white-space:nowrap;">Chart</div>
<svg style="position:absolute;left:49px;top:426px" width="5" height="9" viewBox="0 0 5 9"><path d="M0.5 0.5 L4.5 4.5 L0.5 8.5 Z" fill="#3c3c3c"/></svg>
<div style="position:absolute;left:63px;top:423px;width:14px;height:14px;box-sizing:border-box;border:1px solid #9d9d9d;background:#fff;"></div><svg style="position:absolute;left:63px;top:423px" width="14" height="14" viewBox="0 0 14 14"><path d="M3 6.1 L6.1 10.1 L10.9 3.9" fill="none" stroke="#3c3c3c" stroke-width="1.55"/></svg>
<svg style="position:absolute;left:82px;top:422px" width="16" height="16" viewBox="0 0 16 16"><path d="M0.5 12.5 V4.5 H2 L3 2.5 H6.5 L7.5 4.5 H13.5 V6.5" fill="#fff3c4" stroke="#c89b5a"/>
<path d="M1.5 12.5 L5 6.5 H15.5 L12 12.5 Z" fill="#f7d23e" stroke="#c89b5a"/>
<path d="M3 12 L6 7.2 H14.3" fill="none" stroke="#fff6c8" stroke-width="0.9"/></svg>
<div style="position:absolute;left:104px;top:423.0px;height:16px;line-height:16px;font-size:11px;color:#222;letter-spacing:-0.252px;white-space:nowrap;">Basic Components</div>
<svg style="position:absolute;left:49px;top:446px" width="5" height="9" viewBox="0 0 5 9"><path d="M0.5 0.5 L4.5 4.5 L0.5 8.5 Z" fill="#3c3c3c"/></svg>
<div style="position:absolute;left:63px;top:443px;width:14px;height:14px;box-sizing:border-box;border:1px solid #9d9d9d;background:#fff;"></div><svg style="position:absolute;left:63px;top:443px" width="14" height="14" viewBox="0 0 14 14"><path d="M3 6.1 L6.1 10.1 L10.9 3.9" fill="none" stroke="#3c3c3c" stroke-width="1.55"/></svg>
<svg style="position:absolute;left:82px;top:442px" width="16" height="16" viewBox="0 0 16 16"><path d="M0.5 12.5 V4.5 H2 L3 2.5 H6.5 L7.5 4.5 H13.5 V6.5" fill="#fff3c4" stroke="#c89b5a"/>
<path d="M1.5 12.5 L5 6.5 H15.5 L12 12.5 Z" fill="#f7d23e" stroke="#c89b5a"/>
<path d="M3 12 L6 7.2 H14.3" fill="none" stroke="#fff6c8" stroke-width="0.9"/></svg>
<div style="position:absolute;left:104px;top:443.0px;height:16px;line-height:16px;font-size:11px;color:#222;letter-spacing:-0.161px;white-space:nowrap;">Container Components</div>
<svg style="position:absolute;left:27px;top:466px" width="7" height="6" viewBox="0 0 7 6"><path d="M6 0 V6 H0 Z" fill="#3c3c3c"/></svg>
<div style="position:absolute;left:43px;top:463px;width:14px;height:14px;box-sizing:border-box;border:1px solid #9d9d9d;background:#fff;"></div><svg style="position:absolute;left:43px;top:463px" width="14" height="14" viewBox="0 0 14 14"><path d="M3 6.1 L6.1 10.1 L10.9 3.9" fill="none" stroke="#3c3c3c" stroke-width="1.55"/></svg>
<svg style="position:absolute;left:62px;top:462px" width="16" height="16" viewBox="0 0 16 16"><path d="M0.5 12.5 V4.5 H2 L3 2.5 H6.5 L7.5 4.5 H13.5 V6.5" fill="#fff3c4" stroke="#c89b5a"/>
<path d="M1.5 12.5 L5 6.5 H15.5 L12 12.5 Z" fill="#f7d23e" stroke="#c89b5a"/>
<path d="M3 12 L6 7.2 H14.3" fill="none" stroke="#fff6c8" stroke-width="0.9"/></svg>
<div style="position:absolute;left:84px;top:463.0px;height:16px;line-height:16px;font-size:11px;color:#222;letter-spacing:-0.105px;white-space:nowrap;">Technical Components</div>
</div>
<div style="position:absolute;left:448px;top:232px;width:17px;height:478px;background:#f0f0f0;"></div>
<div style="position:absolute;left:449px;top:233px;width:15px;height:15px;box-sizing:border-box;border:1px solid #a9a9a9;background:#efefef;"></div>
<svg style="position:absolute;left:452px;top:238px" width="9" height="5" viewBox="0 0 9 5"><path d="M0.5 4.5 L4.5 0.5 L8.5 4.5 Z" fill="#3c3c3c"/></svg>
<div style="position:absolute;left:449px;top:248px;width:15px;height:333px;box-sizing:border-box;border:1px solid #a9a9a9;background:#efefef;"></div>
<div style="position:absolute;left:449px;top:694px;width:15px;height:15px;box-sizing:border-box;border:1px solid #a9a9a9;background:#efefef;"></div>
<svg style="position:absolute;left:452px;top:699.5px" width="9" height="5" viewBox="0 0 9 5"><path d="M0.5 0.5 L4.5 4.5 L8.5 0.5 Z" fill="#3c3c3c"/></svg>
<div style="position:absolute;left:499px;top:137px;width:463px;height:133px;box-sizing:border-box;border:1px solid #a9a9a9;"></div>
<div style="position:absolute;left:500px;top:138px;width:461px;height:17px;background:#efefef;"></div>
<div style="position:absolute;left:500px;top:155px;width:461px;height:1px;background:#a9a9a9;"></div>
<div style="position:absolute;left:510.5px;top:139.0px;height:16px;line-height:16px;font-size:11px;color:#111;letter-spacing:-0.158px;white-space:nowrap;">Sections</div>
<div style="position:absolute;left:499px;top:273px;width:463px;height:171px;box-sizing:border-box;border:1px solid #a9a9a9;"></div>
<div style="position:absolute;left:500px;top:274px;width:461px;height:17px;background:#efefef;"></div>
<div style="position:absolute;left:500px;top:291px;width:461px;height:1px;background:#a9a9a9;"></div>
<div style="position:absolute;left:510.5px;top:275.0px;height:16px;line-height:16px;font-size:11px;color:#111;letter-spacing:-0.025px;white-space:nowrap;">Integration of included BW objects</div>
<div style="position:absolute;left:499px;top:447px;width:463px;height:255px;box-sizing:border-box;border:1px solid #a9a9a9;"></div>
<div style="position:absolute;left:500px;top:448px;width:461px;height:17px;background:#efefef;"></div>
<div style="position:absolute;left:500px;top:465px;width:461px;height:1px;background:#a9a9a9;"></div>
<div style="position:absolute;left:510.5px;top:449.0px;height:16px;line-height:16px;font-size:11px;color:#111;letter-spacing:-0.150px;white-space:nowrap;">Properties</div>
<div style="position:absolute;left:510.2px;top:166.0px;height:16px;line-height:16px;font-size:11px;color:#111;letter-spacing:-0.095px;white-space:nowrap;">Selection of sections to be included in the documentation:</div>
<div style="position:absolute;left:511px;top:187px;width:14px;height:14px;box-sizing:border-box;border:1px solid #9d9d9d;background:#fff;"></div><svg style="position:absolute;left:511px;top:187px" width="14" height="14" viewBox="0 0 14 14"><path d="M3 6.1 L6.1 10.1 L10.9 3.9" fill="none" stroke="#3c3c3c" stroke-width="1.55"/></svg>
<div style="position:absolute;left:528.2px;top:187.0px;height:16px;line-height:16px;font-size:11px;color:#111;letter-spacing:-0.001px;white-space:nowrap;">Include report structure (show elements in tree view)</div>
<div style="position:absolute;left:511px;top:215px;width:14px;height:14px;box-sizing:border-box;border:1px solid #9d9d9d;background:#fff;"></div><svg style="position:absolute;left:511px;top:215px" width="14" height="14" viewBox="0 0 14 14"><path d="M3 6.1 L6.1 10.1 L10.9 3.9" fill="none" stroke="#3c3c3c" stroke-width="1.55"/></svg>
<div style="position:absolute;left:528.2px;top:215.0px;height:16px;line-height:16px;font-size:11px;color:#111;letter-spacing:-0.206px;white-space:nowrap;">Include Coding</div>
<svg style="position:absolute;left:531px;top:240px" width="14" height="14" viewBox="0 0 14 14"><circle cx="7" cy="7" r="6.5" fill="#fff" stroke="#a3a3a3" stroke-width="1"/><circle cx="7" cy="7" r="3.9" fill="#454545"/></svg>
<div style="position:absolute;left:548.4px;top:240.0px;height:16px;line-height:16px;font-size:11px;color:#111;letter-spacing:-0.186px;white-space:nowrap;">Show coding in Event section</div>
<svg style="position:absolute;left:691px;top:240px" width="14" height="14" viewBox="0 0 14 14"><circle cx="7" cy="7" r="6.5" fill="#fff" stroke="#a3a3a3" stroke-width="1"/></svg>
<div style="position:absolute;left:708.1px;top:240.0px;height:16px;line-height:16px;font-size:11px;color:#111;letter-spacing:-0.123px;white-space:nowrap;">Show coding in separate chapter</div>
<div style="position:absolute;left:510.2px;top:302.0px;height:16px;line-height:16px;font-size:11px;color:#111;letter-spacing:-0.090px;white-space:nowrap;">Read additional information of DataSource from source system:</div>
<div style="position:absolute;left:511px;top:323px;width:14px;height:14px;box-sizing:border-box;border:1px solid #9d9d9d;background:#fff;"></div><svg style="position:absolute;left:511px;top:323px" width="14" height="14" viewBox="0 0 14 14"><path d="M3 6.1 L6.1 10.1 L10.9 3.9" fill="none" stroke="#3c3c3c" stroke-width="1.55"/></svg>
<div style="position:absolute;left:528.2px;top:323.0px;height:16px;line-height:16px;font-size:11px;color:#111;letter-spacing:-0.015px;white-space:nowrap;">In tree structure of Design Studio</div>
<div style="position:absolute;left:511px;top:348px;width:14px;height:14px;box-sizing:border-box;border:1px solid #9d9d9d;background:#fff;"></div><svg style="position:absolute;left:511px;top:348px" width="14" height="14" viewBox="0 0 14 14"><path d="M3 6.1 L6.1 10.1 L10.9 3.9" fill="none" stroke="#3c3c3c" stroke-width="1.55"/></svg>
<div style="position:absolute;left:528.2px;top:348.0px;height:16px;line-height:16px;font-size:11px;color:#111;letter-spacing:-0.111px;white-space:nowrap;">In documentation of Design Studio</div>
<div style="position:absolute;left:510.2px;top:368.0px;height:16px;line-height:16px;font-size:11px;color:#111;letter-spacing:-0.081px;white-space:nowrap;">Selection of related BW entities to be included in the documentation:</div>
<div style="position:absolute;left:511px;top:389px;width:14px;height:14px;box-sizing:border-box;border:1px solid #9d9d9d;background:#fff;"></div>
<div style="position:absolute;left:528.2px;top:389.0px;height:16px;line-height:16px;font-size:11px;color:#111;letter-spacing:-0.070px;white-space:nowrap;">Include Query documentation</div>
<div style="position:absolute;left:511px;top:414px;width:14px;height:14px;box-sizing:border-box;border:1px solid #9d9d9d;background:#fff;"></div>
<div style="position:absolute;left:528.2px;top:414.0px;height:16px;line-height:16px;font-size:11px;color:#111;letter-spacing:-0.040px;white-space:nowrap;">Include InfoProvider documentation</div>
<div style="position:absolute;left:510.2px;top:476.0px;height:16px;line-height:16px;font-size:11px;color:#111;letter-spacing:-0.066px;white-space:nowrap;">Selection of properties to be included in the documentation:</div>
<div style="position:absolute;left:511px;top:497px;width:14px;height:14px;box-sizing:border-box;border:1px solid #9d9d9d;background:#fff;"></div><svg style="position:absolute;left:511px;top:497px" width="14" height="14" viewBox="0 0 14 14"><path d="M3 6.1 L6.1 10.1 L10.9 3.9" fill="none" stroke="#3c3c3c" stroke-width="1.55"/></svg>
<div style="position:absolute;left:528px;top:497.0px;height:16px;line-height:16px;font-size:11px;color:#111;letter-spacing:-0.311px;white-space:nowrap;">Display</div>
<div style="position:absolute;left:511px;top:522px;width:14px;height:14px;box-sizing:border-box;border:1px solid #9d9d9d;background:#fff;"></div><svg style="position:absolute;left:511px;top:522px" width="14" height="14" viewBox="0 0 14 14"><path d="M3 6.1 L6.1 10.1 L10.9 3.9" fill="none" stroke="#3c3c3c" stroke-width="1.55"/></svg>
<div style="position:absolute;left:528px;top:522.0px;height:16px;line-height:16px;font-size:11px;color:#111;letter-spacing:-0.249px;white-space:nowrap;">General</div>
<div style="position:absolute;left:511px;top:547px;width:14px;height:14px;box-sizing:border-box;border:1px solid #9d9d9d;background:#fff;"></div>
<div style="position:absolute;left:528px;top:547.0px;height:16px;line-height:16px;font-size:11px;color:#111;letter-spacing:0.111px;white-space:nowrap;">Layout</div>
<div style="position:absolute;left:511px;top:572px;width:14px;height:14px;box-sizing:border-box;border:1px solid #9d9d9d;background:#fff;"></div><svg style="position:absolute;left:511px;top:572px" width="14" height="14" viewBox="0 0 14 14"><path d="M3 6.1 L6.1 10.1 L10.9 3.9" fill="none" stroke="#3c3c3c" stroke-width="1.55"/></svg>
<div style="position:absolute;left:528px;top:572.0px;height:16px;line-height:16px;font-size:11px;color:#111;letter-spacing:-0.354px;white-space:nowrap;">Planning</div>
<div style="position:absolute;left:511px;top:597px;width:14px;height:14px;box-sizing:border-box;border:1px solid #9d9d9d;background:#fff;"></div><svg style="position:absolute;left:511px;top:597px" width="14" height="14" viewBox="0 0 14 14"><path d="M3 6.1 L6.1 10.1 L10.9 3.9" fill="none" stroke="#3c3c3c" stroke-width="1.55"/></svg>
<div style="position:absolute;left:528px;top:597.0px;height:16px;line-height:16px;font-size:11px;color:#111;letter-spacing:-0.250px;white-space:nowrap;">Value Help</div>
<div style="position:absolute;left:511px;top:622px;width:14px;height:14px;box-sizing:border-box;border:1px solid #9d9d9d;background:#fff;"></div><svg style="position:absolute;left:511px;top:622px" width="14" height="14" viewBox="0 0 14 14"><path d="M3 6.1 L6.1 10.1 L10.9 3.9" fill="none" stroke="#3c3c3c" stroke-width="1.55"/></svg>
<div style="position:absolute;left:528px;top:622.0px;height:16px;line-height:16px;font-size:11px;color:#111;letter-spacing:-0.192px;white-space:nowrap;">Data Source Browser</div>
<div style="position:absolute;left:511px;top:647px;width:14px;height:14px;box-sizing:border-box;border:1px solid #9d9d9d;background:#fff;"></div><svg style="position:absolute;left:511px;top:647px" width="14" height="14" viewBox="0 0 14 14"><path d="M3 6.1 L6.1 10.1 L10.9 3.9" fill="none" stroke="#3c3c3c" stroke-width="1.55"/></svg>
<div style="position:absolute;left:528px;top:647.0px;height:16px;line-height:16px;font-size:11px;color:#111;letter-spacing:-0.176px;white-space:nowrap;">Parameters</div>
<div style="position:absolute;left:511px;top:672px;width:14px;height:14px;box-sizing:border-box;border:1px solid #9d9d9d;background:#fff;"></div><svg style="position:absolute;left:511px;top:672px" width="14" height="14" viewBox="0 0 14 14"><path d="M3 6.1 L6.1 10.1 L10.9 3.9" fill="none" stroke="#3c3c3c" stroke-width="1.55"/></svg>
<div style="position:absolute;left:528px;top:672.0px;height:16px;line-height:16px;font-size:11px;color:#111;letter-spacing:0.041px;white-space:nowrap;">Content of FormattedTextView</div>
<div style="position:absolute;left:731px;top:497px;width:14px;height:14px;box-sizing:border-box;border:1px solid #9d9d9d;background:#fff;"></div><svg style="position:absolute;left:731px;top:497px" width="14" height="14" viewBox="0 0 14 14"><path d="M3 6.1 L6.1 10.1 L10.9 3.9" fill="none" stroke="#3c3c3c" stroke-width="1.55"/></svg>
<div style="position:absolute;left:748px;top:497.0px;height:16px;line-height:16px;font-size:11px;color:#111;letter-spacing:-0.203px;white-space:nowrap;">Behavior</div>
<div style="position:absolute;left:731px;top:522px;width:14px;height:14px;box-sizing:border-box;border:1px solid #9d9d9d;background:#fff;"></div><svg style="position:absolute;left:731px;top:522px" width="14" height="14" viewBox="0 0 14 14"><path d="M3 6.1 L6.1 10.1 L10.9 3.9" fill="none" stroke="#3c3c3c" stroke-width="1.55"/></svg>
<div style="position:absolute;left:748px;top:522.0px;height:16px;line-height:16px;font-size:11px;color:#111;letter-spacing:-0.224px;white-space:nowrap;">Prompts</div>
<div style="position:absolute;left:731px;top:547px;width:14px;height:14px;box-sizing:border-box;border:1px solid #9d9d9d;background:#fff;"></div><svg style="position:absolute;left:731px;top:547px" width="14" height="14" viewBox="0 0 14 14"><path d="M3 6.1 L6.1 10.1 L10.9 3.9" fill="none" stroke="#3c3c3c" stroke-width="1.55"/></svg>
<div style="position:absolute;left:748px;top:547.0px;height:16px;line-height:16px;font-size:11px;color:#111;letter-spacing:-0.242px;white-space:nowrap;">Data Binding</div>
<div style="position:absolute;left:731px;top:572px;width:14px;height:14px;box-sizing:border-box;border:1px solid #9d9d9d;background:#fff;"></div><svg style="position:absolute;left:731px;top:572px" width="14" height="14" viewBox="0 0 14 14"><path d="M3 6.1 L6.1 10.1 L10.9 3.9" fill="none" stroke="#3c3c3c" stroke-width="1.55"/></svg>
<div style="position:absolute;left:748px;top:572.0px;height:16px;line-height:16px;font-size:11px;color:#111;letter-spacing:-0.166px;white-space:nowrap;">Optimization for Low Data Volume</div>
<div style="position:absolute;left:731px;top:597px;width:14px;height:14px;box-sizing:border-box;border:1px solid #9d9d9d;background:#fff;"></div><svg style="position:absolute;left:731px;top:597px" width="14" height="14" viewBox="0 0 14 14"><path d="M3 6.1 L6.1 10.1 L10.9 3.9" fill="none" stroke="#3c3c3c" stroke-width="1.55"/></svg>
<div style="position:absolute;left:748px;top:597.0px;height:16px;line-height:16px;font-size:11px;color:#111;letter-spacing:-0.200px;white-space:nowrap;">Scripting</div>
<div style="position:absolute;left:731px;top:622px;width:14px;height:14px;box-sizing:border-box;border:1px solid #9d9d9d;background:#fff;"></div><svg style="position:absolute;left:731px;top:622px" width="14" height="14" viewBox="0 0 14 14"><path d="M3 6.1 L6.1 10.1 L10.9 3.9" fill="none" stroke="#3c3c3c" stroke-width="1.55"/></svg>
<div style="position:absolute;left:748px;top:622.0px;height:16px;line-height:16px;font-size:11px;color:#111;letter-spacing:0.110px;white-space:nowrap;">User Interactivity</div>
<div style="position:absolute;left:731px;top:647px;width:14px;height:14px;box-sizing:border-box;border:1px solid #9d9d9d;background:#fff;"></div><svg style="position:absolute;left:731px;top:647px" width="14" height="14" viewBox="0 0 14 14"><path d="M3 6.1 L6.1 10.1 L10.9 3.9" fill="none" stroke="#3c3c3c" stroke-width="1.55"/></svg>
<div style="position:absolute;left:748px;top:647.0px;height:16px;line-height:16px;font-size:11px;color:#111;letter-spacing:-0.057px;white-space:nowrap;">Events</div>
<svg style="position:absolute;left:980px;top:787px" width="12" height="12" viewBox="0 0 12 12"><g fill="#c9bfb3"><rect x="1" y="10" width="1" height="1"/><rect x="5" y="10" width="1" height="1"/><rect x="9" y="10" width="1" height="1"/><rect x="9" y="6" width="1" height="1"/><rect x="9" y="2" width="1" height="1"/></g></svg>
</body></html>
